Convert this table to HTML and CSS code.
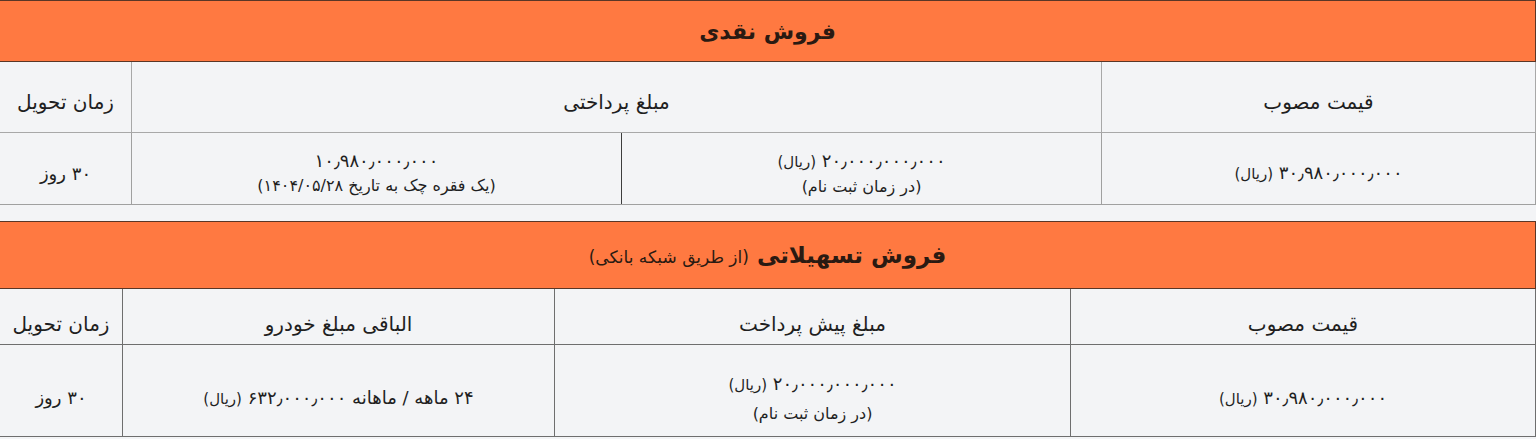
FILE: index.html
```html
<!DOCTYPE html>
<html lang="fa" dir="rtl">
<head>
<meta charset="utf-8">
<title>فروش</title>
<link rel="stylesheet" href="styles.css">
</head>
<body>
<div class="page">
  <table class="sale sale-cash">
    <colgroup>
      <col class="c-price">
      <col class="c-pay1">
      <col class="c-pay2">
      <col class="c-time">
    </colgroup>
    <tr>
      <th class="title" colspan="4">فروش نقدی</th>
    </tr>
    <tr class="head">
      <td>قیمت مصوب</td>
      <td colspan="2">مبلغ پرداختی</td>
      <td>زمان تحویل</td>
    </tr>
    <tr class="data">
      <td>۳۰٫۹۸۰٫۰۰۰٫۰۰۰ <span class="unit">(ریال)</span></td>
      <td class="dark-l">۲۰٫۰۰۰٫۰۰۰٫۰۰۰ <span class="unit">(ریال)</span><br><span class="note">(در زمان ثبت نام)</span></td>
      <td>۱۰٫۹۸۰٫۰۰۰٫۰۰۰<br><span class="note">(یک فقره چک به تاریخ ۱۴۰۴/۰۵/۲۸)</span></td>
      <td>۳۰ روز</td>
    </tr>
  </table>

  <table class="sale sale-loan">
    <colgroup>
      <col class="l-price">
      <col class="l-pre">
      <col class="l-rest">
      <col class="l-time">
    </colgroup>
    <tr>
      <th class="title" colspan="4">فروش تسهیلاتی <span class="sub">(از طریق شبکه بانکی)</span></th>
    </tr>
    <tr class="head">
      <td>قیمت مصوب</td>
      <td>مبلغ پیش پرداخت</td>
      <td>الباقی مبلغ خودرو</td>
      <td>زمان تحویل</td>
    </tr>
    <tr class="data">
      <td>۳۰٫۹۸۰٫۰۰۰٫۰۰۰ <span class="unit">(ریال)</span></td>
      <td class="tall">۲۰٫۰۰۰٫۰۰۰٫۰۰۰ <span class="unit">(ریال)</span><br><span class="note">(در زمان ثبت نام)</span></td>
      <td>۲۴ ماهه / ماهانه ۶۳۲٫۰۰۰٫۰۰۰ <span class="unit">(ریال)</span></td>
      <td>۳۰ روز</td>
    </tr>
  </table>
</div>
</body>
</html>
```

FILE: styles.css
```css
html, body {
  margin: 0;
  padding: 0;
  background: #f3f4f6;
}
body {
  font-family: "DejaVu Sans", "Noto Sans", sans-serif;
  color: #1f1f1f;
}
.page {
  display: flex;
  flex-direction: column;
  gap: 16px;
  width: 1536px;
}
.sale {
  width: 1536px;
  border-collapse: collapse;
  table-layout: fixed;
  background: #f3f4f6;
}
.sale td, .sale th {
  text-align: center;
  vertical-align: middle;
  padding: 0;
}
.title {
  background: #ff7941;
  border: 1px solid #5a3626;
  font-size: 22px;
  font-weight: bold;
  color: #2a1a12;
}
.sale-cash .title { height: 60px; }
.sale-loan .title { height: 66px; font-size: 23px; }
.sub {
  font-size: 17px;
  font-weight: normal;
}
.head td {
  font-size: 20px;
  border: 1px solid #a8a8a8;
}
.data td {
  font-size: 18px;
  line-height: 24px;
  border: 1px solid #a0a0a0;
}
.sale-cash .head td { height: 60px; padding-top: 10px; }
.sale-cash .data td { height: 61px; padding-top: 10px; }
.sale-loan .head td { height: 41px; padding-top: 14px; border-color: #6e6e6e; }
.sale-loan .data td { height: 76px; padding-top: 15px; border-color: #6e6e6e; }
.sale-loan .data td.tall { line-height: 27px; }
.sale-cash .data td.dark-l { border-left-color: #3d3d3d; }
.unit { font-size: 15px; }
.note { font-size: 16px; }
.c-price { width: 434px; }
.c-pay1 { width: 480px; }
.c-pay2 { width: 490px; }
.c-time { width: 132px; }
.l-price { width: 465px; }
.l-pre { width: 516px; }
.l-rest { width: 432px; }
.l-time { width: 123px; }
```
